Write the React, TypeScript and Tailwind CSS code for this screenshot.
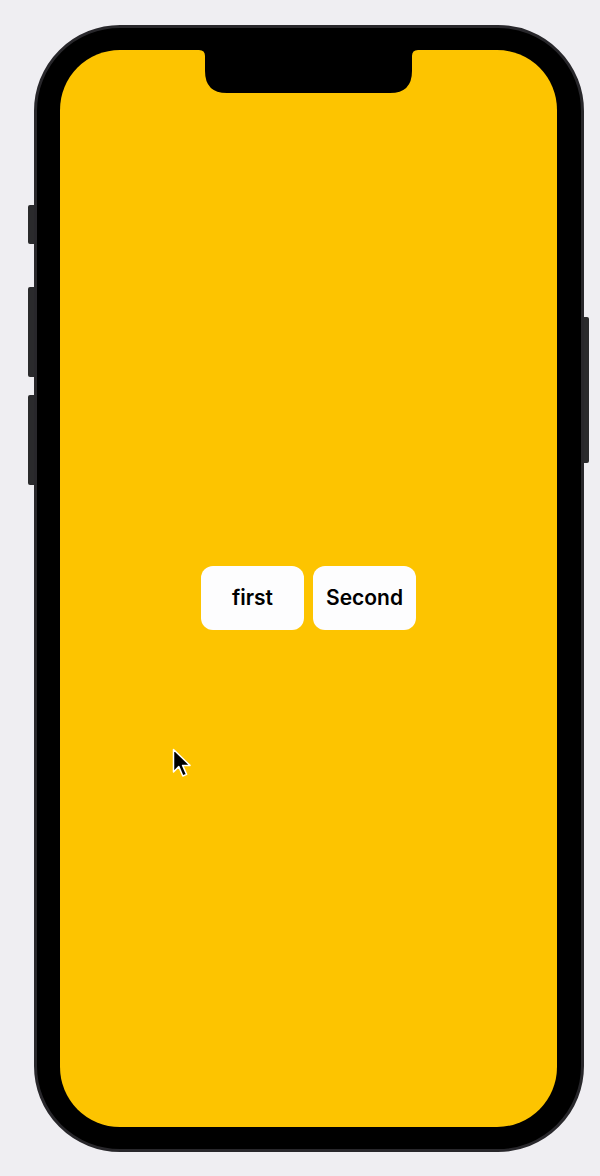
import React from 'react';

// iPhone frame with a yellow screen and two buttons
export default function App() {
  return (
    <div className="relative w-[600px] h-[1176px] bg-[#efeef2] pt-[25px] pl-[34px] overflow-hidden" style={{ fontFamily: 'Inter, "Liberation Sans", sans-serif' }}>
      {/* Phone */}
      <div className="relative w-[550px] h-[1127px] rounded-[86px] bg-black border-[3px] border-[#28272b] pt-[22px] pl-[23px]">
        {/* side buttons */}
        <div className="absolute left-[-9px] top-[177px] w-[6px] h-[39px] rounded-l-[2px] bg-[#2a2a2c]" />
        <div className="absolute left-[-9px] top-[259px] w-[6px] h-[90px] rounded-l-[2px] bg-[#2a2a2c]" />
        <div className="absolute left-[-9px] top-[367px] w-[6px] h-[90px] rounded-l-[2px] bg-[#2a2a2c]" />
        <div className="absolute right-[-8px] top-[289px] w-[5px] h-[146px] rounded-r-[2px] bg-[#2a2a2c]" />

        {/* Screen */}
        <div className="relative w-[497px] h-[1077px] rounded-[60px] bg-[#fdc400] overflow-hidden flex items-center justify-center pt-[18px]">
          {/* notch */}
          <svg className="absolute top-0 left-[139px]" width="219" height="43" viewBox="0 0 219 43">
            <path d="M0 0 H219 Q213 0 213 6 V21 Q213 43 191 43 H28 Q6 43 6 21 V6 Q6 0 0 0 Z" fill="#000" />
          </svg>

          <div className="flex gap-[9px]">
            <button className="w-[103px] h-[64px] rounded-[12px] bg-[#fdfdfe] text-[21px] font-semibold text-black">first</button>
            <button className="w-[103px] h-[64px] rounded-[12px] bg-[#fdfdfe] text-[21px] font-semibold text-black">Second</button>
          </div>
        </div>
      </div>

      {/* mouse cursor */}
      <svg className="absolute left-[172px] top-[748px]" width="20" height="31" viewBox="0 0 20 31">
        <path d="M1.5 1.5 V24 L6.8 18.6 L10.8 28 L14.6 26.4 L10.6 17.4 H18 Z" fill="#000" stroke="#fff" strokeWidth="1.5" strokeLinejoin="round" />
      </svg>
    </div>
  );
}
